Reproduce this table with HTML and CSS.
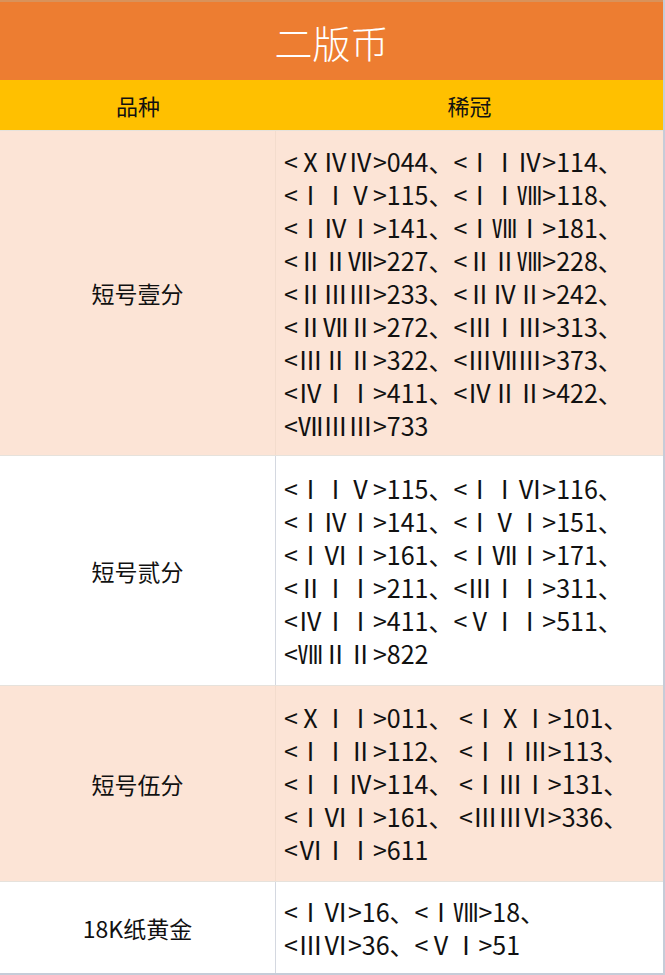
FILE: index.html
```html
<!DOCTYPE html>
<html lang="zh">
<head>
<meta charset="utf-8">
<title>二版币</title>
<link rel="stylesheet" href="styles.css">
</head>
<body>
<div class="sheet">
  <div class="title">二版币</div>
  <div class="head">
    <div class="hcell kind">品种</div>
    <div class="hcell">稀冠</div>
  </div>
  <div class="row peach r1">
    <div class="name">短号壹分</div>
    <div class="codes">
      <div class="ln">&lt;ⅩⅣⅣ&gt;044、&lt;ⅠⅠⅣ&gt;114、</div>
      <div class="ln">&lt;ⅠⅠⅤ&gt;115、&lt;ⅠⅠⅧ&gt;118、</div>
      <div class="ln">&lt;ⅠⅣⅠ&gt;141、&lt;ⅠⅧⅠ&gt;181、</div>
      <div class="ln">&lt;ⅡⅡⅦ&gt;227、&lt;ⅡⅡⅧ&gt;228、</div>
      <div class="ln">&lt;ⅡⅢⅢ&gt;233、&lt;ⅡⅣⅡ&gt;242、</div>
      <div class="ln">&lt;ⅡⅦⅡ&gt;272、&lt;ⅢⅠⅢ&gt;313、</div>
      <div class="ln">&lt;ⅢⅡⅡ&gt;322、&lt;ⅢⅦⅢ&gt;373、</div>
      <div class="ln">&lt;ⅣⅠⅠ&gt;411、&lt;ⅣⅡⅡ&gt;422、</div>
      <div class="ln">&lt;ⅦⅢⅢ&gt;733</div>
    </div>
  </div>
  <div class="row white r2">
    <div class="name">短号贰分</div>
    <div class="codes">
      <div class="ln">&lt;ⅠⅠⅤ&gt;115、&lt;ⅠⅠⅥ&gt;116、</div>
      <div class="ln">&lt;ⅠⅣⅠ&gt;141、&lt;ⅠⅤⅠ&gt;151、</div>
      <div class="ln">&lt;ⅠⅥⅠ&gt;161、&lt;ⅠⅦⅠ&gt;171、</div>
      <div class="ln">&lt;ⅡⅠⅠ&gt;211、&lt;ⅢⅠⅠ&gt;311、</div>
      <div class="ln">&lt;ⅣⅠⅠ&gt;411、&lt;ⅤⅠⅠ&gt;511、</div>
      <div class="ln">&lt;ⅧⅡⅡ&gt;822</div>
    </div>
  </div>
  <div class="row peach r3">
    <div class="name">短号伍分</div>
    <div class="codes">
      <div class="ln">&lt;ⅩⅠⅠ&gt;011、 &lt;ⅠⅩⅠ&gt;101、</div>
      <div class="ln">&lt;ⅠⅠⅡ&gt;112、 &lt;ⅠⅠⅢ&gt;113、</div>
      <div class="ln">&lt;ⅠⅠⅣ&gt;114、 &lt;ⅠⅢⅠ&gt;131、</div>
      <div class="ln">&lt;ⅠⅥⅠ&gt;161、 &lt;ⅢⅢⅥ&gt;336、</div>
      <div class="ln">&lt;ⅥⅠⅠ&gt;611</div>
    </div>
  </div>
  <div class="row white r4">
    <div class="name">18K纸黄金</div>
    <div class="codes">
      <div class="ln">&lt;ⅠⅥ&gt;16、&lt;ⅠⅧ&gt;18、</div>
      <div class="ln">&lt;ⅢⅥ&gt;36、&lt;ⅤⅠ&gt;51</div>
    </div>
  </div>
</div>
</body>
</html>
```
FILE: styles.css
```css
html, body {
  margin: 0;
  padding: 0;
  background: #ffffff;
}
body {
  font-family: "Noto Sans CJK SC", "Noto Sans", sans-serif;
  color: #111111;
}
.sheet {
  width: 665px;
  height: 975px;
  overflow: hidden;
  display: flex;
  flex-direction: column;
  border-right: 2px solid #c6ccd8;
  box-sizing: border-box;
}
.title {
  flex: 0 0 80px;
  background: #ed7d31;
  color: #ffffff;
  font-size: 38px;
  font-weight: 300;
  display: flex;
  align-items: center;
  justify-content: center;
  border-top: 2px solid #d9925a;
  box-sizing: border-box;
}
.head {
  flex: 0 0 50px;
  background: #ffc000;
  display: grid;
  grid-template-columns: 276px 1fr;
  font-size: 22px;
}
.hcell {
  display: flex;
  align-items: center;
  justify-content: center;
}
.row {
  display: grid;
  grid-template-columns: 276px 1fr;
  border-top: 1px solid #e6e2dc;
  box-sizing: border-box;
}
.r1 { flex: 0 0 325px; }
.r2 { flex: 0 0 230px; }
.r3 { flex: 0 0 196px; }
.r4 {
  flex: 1 1 auto;
  border-bottom: 2px solid #c6ccd8;
}
.peach {
  background: #fce4d6;
}
.white {
  background: #ffffff;
}
.name {
  display: flex;
  align-items: center;
  justify-content: center;
  font-size: 23px;
  border-right: 1px solid #d4d8e0;
}
.peach .name {
  border-right-color: #f3dccd;
}
.codes {
  padding: 0 0 0 8px;
  font-size: 25px;
  line-height: 33px;
  display: flex;
  flex-direction: column;
  justify-content: center;
}
.ln {
  white-space: pre;
}
```
